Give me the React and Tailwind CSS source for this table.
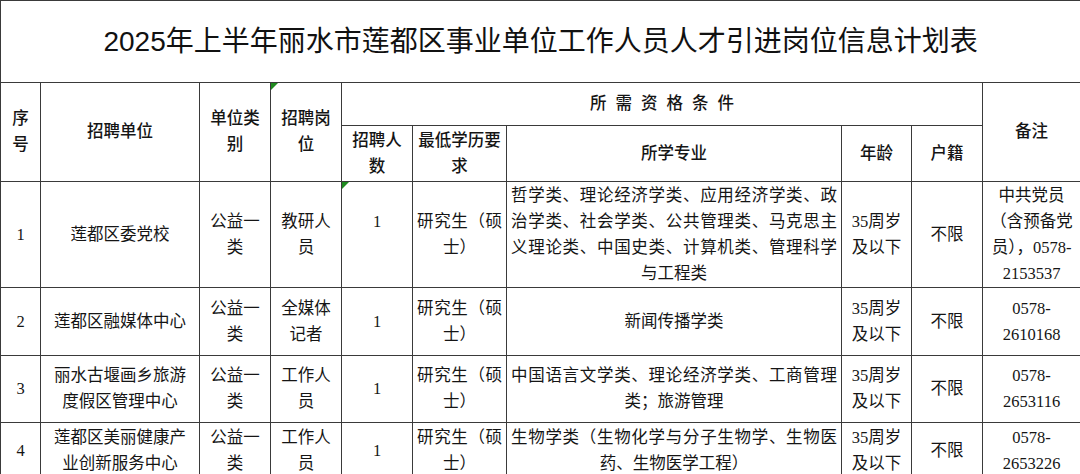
import React from 'react';

const td = "border border-[#3a3a3a] px-[4px] align-middle text-center leading-[26px]";
const just = "border border-[#3a3a3a] px-[4px] align-middle text-justify [text-align-last:center] leading-[26px]";
const unitTd = "border border-[#3a3a3a] px-[10px] align-middle text-center leading-[26px]";

// little green "number stored as text" marker in the top-left corner
const Flag = () => (
  <span className="absolute top-0 left-0 w-0 h-0 border-t-[7px] border-t-[#1f8a1f] border-r-[7px] border-r-transparent" />
);

const rows = [
  {
    no: '1',
    unit: '莲都区委党校',
    kind: '公益一类',
    post: '教研人员',
    count: (<>1<br />&nbsp;</>),
    flag: true,
    major: '哲学类、理论经济学类、应用经济学类、政治学类、社会学类、公共管理类、马克思主义理论类、中国史类、计算机类、管理科学与工程类',
    note: (<>中共党员<br />（含预备党<br />员），0578-<br />2153537</>),
    h: 'h-[106px]',
  },
  {
    no: '2',
    unit: '莲都区融媒体中心',
    kind: '公益一类',
    post: '全媒体记者',
    count: '1',
    major: '新闻传播学类',
    note: (<>0578-<br />2610168</>),
    h: 'h-[68px]',
  },
  {
    no: '3',
    unit: '丽水古堰画乡旅游度假区管理中心',
    kind: '公益一类',
    post: '工作人员',
    count: '1',
    major: '中国语言文学类、理论经济学类、工商管理类；旅游管理',
    note: (<>0578-<br />2653116</>),
    h: 'h-[67px]',
  },
  {
    no: '4',
    unit: '莲都区美丽健康产业创新服务中心',
    kind: '公益一类',
    post: '工作人员',
    count: '1',
    major: '生物学类（生物化学与分子生物学、生物医药、生物医学工程）',
    note: (<>0578-<br />2653226</>),
    h: 'h-[56px]',
  },
];

export default function App() {
  return (
    <div className="w-[1080px] h-[474px] overflow-hidden bg-white text-[#151515]">
      <table className="w-[1080px] table-fixed border-collapse font-['Liberation_Serif','Noto_Sans_CJK_SC',serif] text-[16.5px]">
        <colgroup>
          <col className="w-[40px]" />
          <col className="w-[159px]" />
          <col className="w-[71px]" />
          <col className="w-[71px]" />
          <col className="w-[71px]" />
          <col className="w-[94px]" />
          <col className="w-[335px]" />
          <col className="w-[70px]" />
          <col className="w-[71px]" />
          <col className="w-[98px]" />
        </colgroup>
        <tbody>
          {/* title */}
          <tr className="h-[82px]">
            <td colSpan={10} className="border border-[#3a3a3a] text-center align-middle font-['Liberation_Sans','Noto_Sans_CJK_SC',sans-serif] text-[28px] text-[#111]">
              2025年上半年丽水市莲都区事业单位工作人员人才引进岗位信息计划表
            </td>
          </tr>

          {/* header */}
          <tr className="h-[43px] font-medium">
            <td rowSpan={2} className={td}>序号</td>
            <td rowSpan={2} className={td}>招聘单位</td>
            <td rowSpan={2} className={td}>单位类别</td>
            <td rowSpan={2} className={td + " relative"}>
              <Flag />
              招聘岗位
            </td>
            <td colSpan={5} className={td + " tracking-[9px] pl-[13px]"}>所需资格条件</td>
            <td rowSpan={2} className={td}>备注</td>
          </tr>
          <tr className="h-[56px] font-medium">
            <td className={td}>招聘人数</td>
            <td className={td}>最低学历要求</td>
            <td className={td}>所学专业</td>
            <td className={td}>年龄</td>
            <td className={td}>户籍</td>
          </tr>

          {rows.map((r) => (
            <tr key={r.no} className={r.h}>
              <td className={td}>{r.no}</td>
              <td className={unitTd}>{r.unit}</td>
              <td className={td}>{r.kind}</td>
              <td className={td}>{r.post}</td>
              <td className={td + (r.flag ? " relative" : "")}>
                {r.flag && <Flag />}
                {r.count}
              </td>
              <td className={just}>研究生（硕士）</td>
              <td className={just}>{r.major}</td>
              <td className={td}>35周岁及以下</td>
              <td className={td}>不限</td>
              <td className={td}>{r.note}</td>
            </tr>
          ))}
        </tbody>
      </table>
    </div>
  );
}
